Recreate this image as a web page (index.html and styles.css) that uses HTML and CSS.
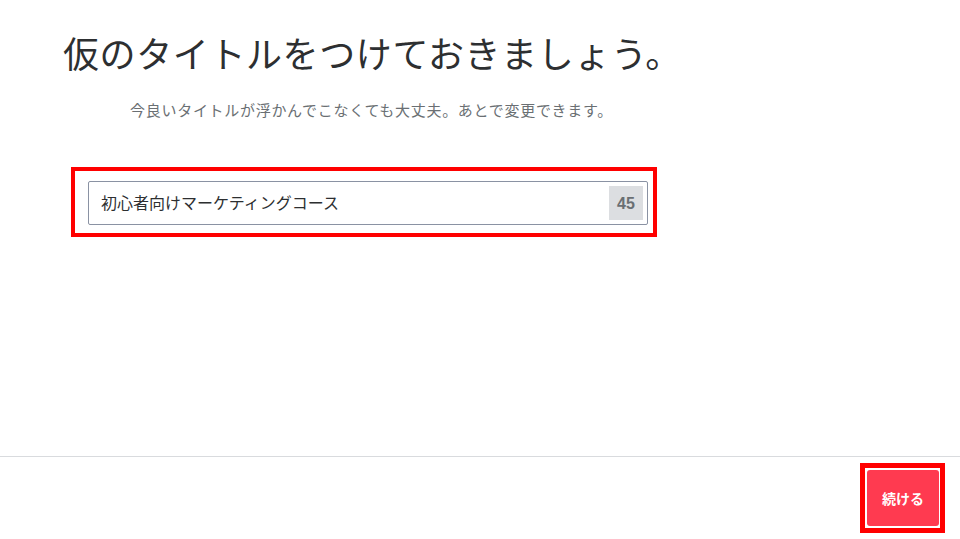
FILE: index.html
```html
<!DOCTYPE html>
<html lang="ja">
<head>
<meta charset="utf-8">
<link rel="stylesheet" href="styles.css">
</head>
<body>
<div class="page">
  <main class="main">
    <div class="intro">
      <h1 class="title">仮のタイトルをつけておきましょう。</h1>
      <p class="subtitle">今良いタイトルが浮かんでこなくても大丈夫。あとで変更できます。</p>
    </div>
    <div class="highlight field-highlight">
      <div class="field">
        <span class="field-text">初心者向けマーケティングコース</span>
        <span class="counter">45</span>
      </div>
    </div>
  </main>
  <footer class="footer">
    <div class="highlight btn-highlight">
      <button class="btn">続ける</button>
    </div>
  </footer>
</div>
</body>
</html>
```
FILE: styles.css
```css
* { box-sizing: border-box; }
html, body { margin: 0; padding: 0; background: #fff; }
body {
  font-family: "Noto Sans CJK JP", "Noto Sans", sans-serif;
  color: #2d2f31;
}
.page {
  width: 960px;
  height: 539px;
  display: flex;
  flex-direction: column;
}
.main {
  flex: 1;
  padding: 23px 0 0 63px;
}
.intro {
  display: inline-flex;
  flex-direction: column;
  align-items: center;
  height: 120px;
}
.title {
  margin: 0;
  font-size: 36px;
  font-weight: 400;
  line-height: 58px;
  letter-spacing: 0.6px;
  color: #2d2f31;
}
.subtitle {
  margin: 18px 0 0 -2px;
  font-size: 15px;
  line-height: 22px;
  letter-spacing: 0.7px;
  color: #6a6f73;
}
.highlight {
  border: 4px solid #ff0000;
}
.field-highlight {
  width: 586px;
  height: 70px;
  margin: 24px 0 0 8px;
  padding: 10px 5px 8px 13px;
}
.field {
  height: 44px;
  border: 1px solid #8a92a3;
  border-radius: 2px;
  display: flex;
  align-items: center;
  padding: 0 4px 0 12px;
}
.field-text {
  flex: 1;
  font-size: 16px;
  line-height: 20px;
  margin-top: -3px;
  color: #2d2f31;
}
.counter {
  width: 34px;
  height: 34px;
  background: #dcdee1;
  display: flex;
  align-items: center;
  justify-content: center;
  padding-top: 2px;
  font-family: "Liberation Sans", Arial, sans-serif;
  font-weight: 700;
  font-size: 16px;
  color: #6a6f73;
}
.footer {
  height: 83px;
  border-top: 1px solid #d9dbde;
  display: flex;
  justify-content: flex-end;
  align-items: flex-start;
  padding: 6px 15px 0 0;
}
.btn-highlight {
  width: 85px;
  height: 70px;
  border-width: 5px;
  padding: 2px 1px 2px 2px;
}
.btn {
  width: 100%;
  height: 100%;
  border: none;
  border-radius: 3px;
  background: #ff3a50;
  color: #fff;
  font-family: "Noto Sans CJK JP", sans-serif;
  font-weight: 700;
  font-size: 14px;
  padding: 0;
}
```
